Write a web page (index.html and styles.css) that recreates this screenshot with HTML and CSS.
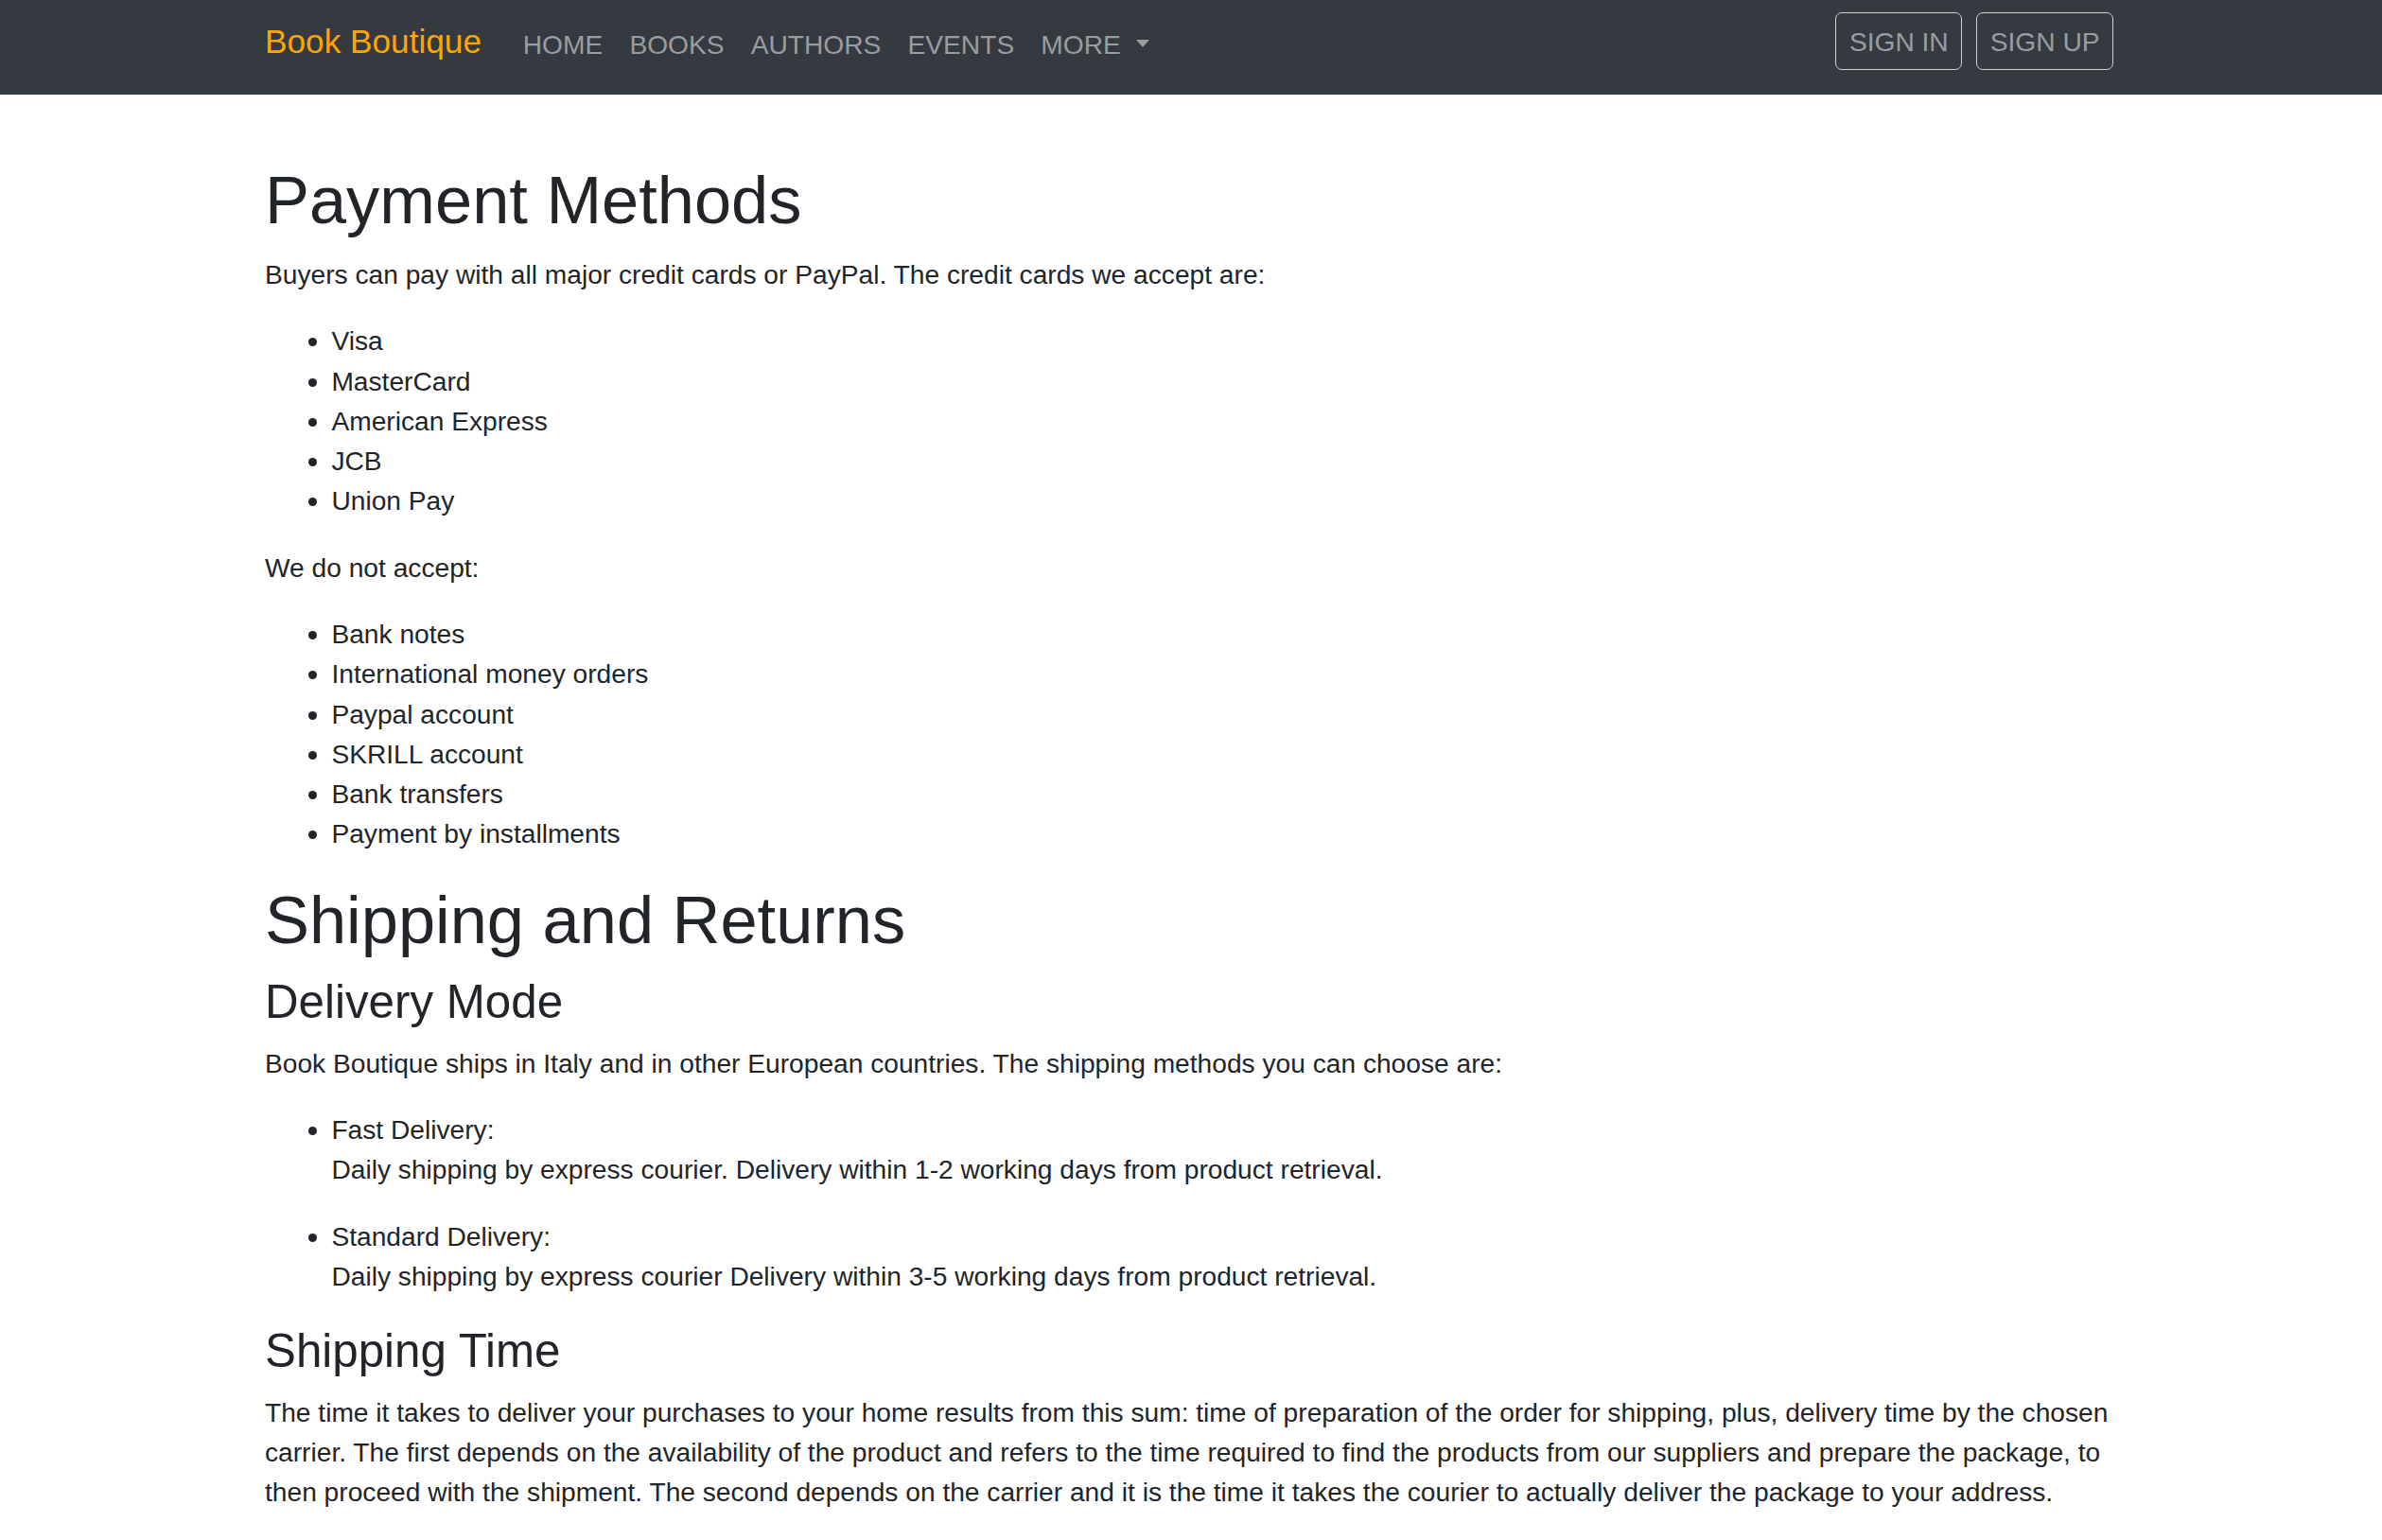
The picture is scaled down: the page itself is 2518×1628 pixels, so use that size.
FILE: index.html
```html
<!DOCTYPE html>
<html lang="en">
<head>
<meta charset="utf-8">
<title>Book Boutique - Payment Methods</title>
<link rel="stylesheet" href="styles.css">
</head>
<body>
<nav class="navbar">
  <div class="navbar-inner">
    <a class="brand" href="#">Book Boutique</a>
    <ul class="nav">
      <li><a class="nav-link" href="#">Home</a></li>
      <li><a class="nav-link" href="#">Books</a></li>
      <li><a class="nav-link" href="#">Authors</a></li>
      <li><a class="nav-link" href="#">Events</a></li>
      <li><a class="nav-link dropdown-toggle" href="#">More</a></li>
    </ul>
    <div class="auth">
      <button class="btn-auth" type="button">Sign In</button>
      <button class="btn-auth" type="button">Sign Up</button>
    </div>
  </div>
</nav>
<main class="container">
  <h1>Payment Methods</h1>
  <p>Buyers can pay with all major credit cards or PayPal. The credit cards we accept are:</p>
  <ul>
    <li>Visa</li>
    <li>MasterCard</li>
    <li>American Express</li>
    <li>JCB</li>
    <li>Union Pay</li>
  </ul>
  <p>We do not accept:</p>
  <ul>
    <li>Bank notes</li>
    <li>International money orders</li>
    <li>Paypal account</li>
    <li>SKRILL account</li>
    <li>Bank transfers</li>
    <li>Payment by installments</li>
  </ul>
  <h1>Shipping and Returns</h1>
  <h3>Delivery Mode</h3>
  <p>Book Boutique ships in Italy and in other European countries. The shipping methods you can choose are:</p>
  <ul>
    <li><p>Fast Delivery:<br>Daily shipping by express courier. Delivery within 1-2 working days from product retrieval.</p></li>
    <li><p>Standard Delivery:<br>Daily shipping by express courier Delivery within 3-5 working days from product retrieval.</p></li>
  </ul>
  <h3>Shipping Time</h3>
  <p class="last">The time it takes to deliver your purchases to your home results from this sum: time of preparation of the order for shipping, plus, delivery time by the chosen carrier. The first depends on the availability of the product and refers to the time required to find the products from our suppliers and prepare the package, to then proceed with the shipment. The second depends on the carrier and it is the time it takes the courier to actually deliver the package to your address.</p>
</main>
</body>
</html>
```

FILE: styles.css
```css
html {
  font-size: 28.17px;
}

body {
  margin: 0;
  font-family: "Liberation Sans", Arial, Helvetica, sans-serif;
  font-size: 28.17px;
  line-height: 42.25px;
  color: #212529;
  background: #ffffff;
}

.navbar {
  background: #343a40;
  height: 100px;
  box-sizing: border-box;
  padding-top: 11.7px;
}

.navbar-inner {
  width: 1958px;
  margin: 0 auto;
  display: flex;
  align-items: flex-start;
}

.brand {
  font-size: 35.21px;
  line-height: 52.8px;
  padding: 6.5px 0 4.9px;
  margin-right: 29.7px;
  color: #ffa500;
  text-decoration: none;
  white-space: nowrap;
}

.nav {
  display: flex;
  list-style: none;
  margin: 0;
  padding: 0;
}

.nav-link {
  display: block;
  padding: 14.08px;
  line-height: 42.25px;
  color: #9a9da0;
  text-decoration: none;
  text-transform: uppercase;
}

.dropdown-toggle::after {
  content: "";
  display: inline-block;
  margin-left: 16px;
  vertical-align: 0.255em;
  border-top: 8.4px solid #9a9da0;
  border-right: 7px solid transparent;
  border-left: 7px solid transparent;
  border-bottom: 0;
}

.auth {
  margin-left: auto;
  margin-right: 4px;
  margin-top: 1.3px;
  display: flex;
  gap: 15px;
}

.btn-auth {
  font-family: inherit;
  font-size: 28.17px;
  line-height: 42.25px;
  color: #9a9da0;
  background: transparent;
  border: 1.76px solid #cfd1d3;
  border-radius: 7px;
  padding: 8.6px 13.5px;
  text-transform: uppercase;
  cursor: pointer;
}

.container {
  width: 1958px;
  margin: 0 auto;
  padding-top: 70.35px;
}

h1 {
  font-size: 70.42px;
  line-height: 84.5px;
  font-weight: 400;
  margin: 0 0 14.08px;
}

h3 {
  font-size: 49.3px;
  line-height: 59.16px;
  font-weight: 400;
  margin: 0 0 14.08px;
}

p {
  margin: 0 0 28.17px;
}

ul {
  margin: 0 0 28.17px;
  padding-left: 70.42px;
}

.last {
  margin-bottom: 0;
}
```
